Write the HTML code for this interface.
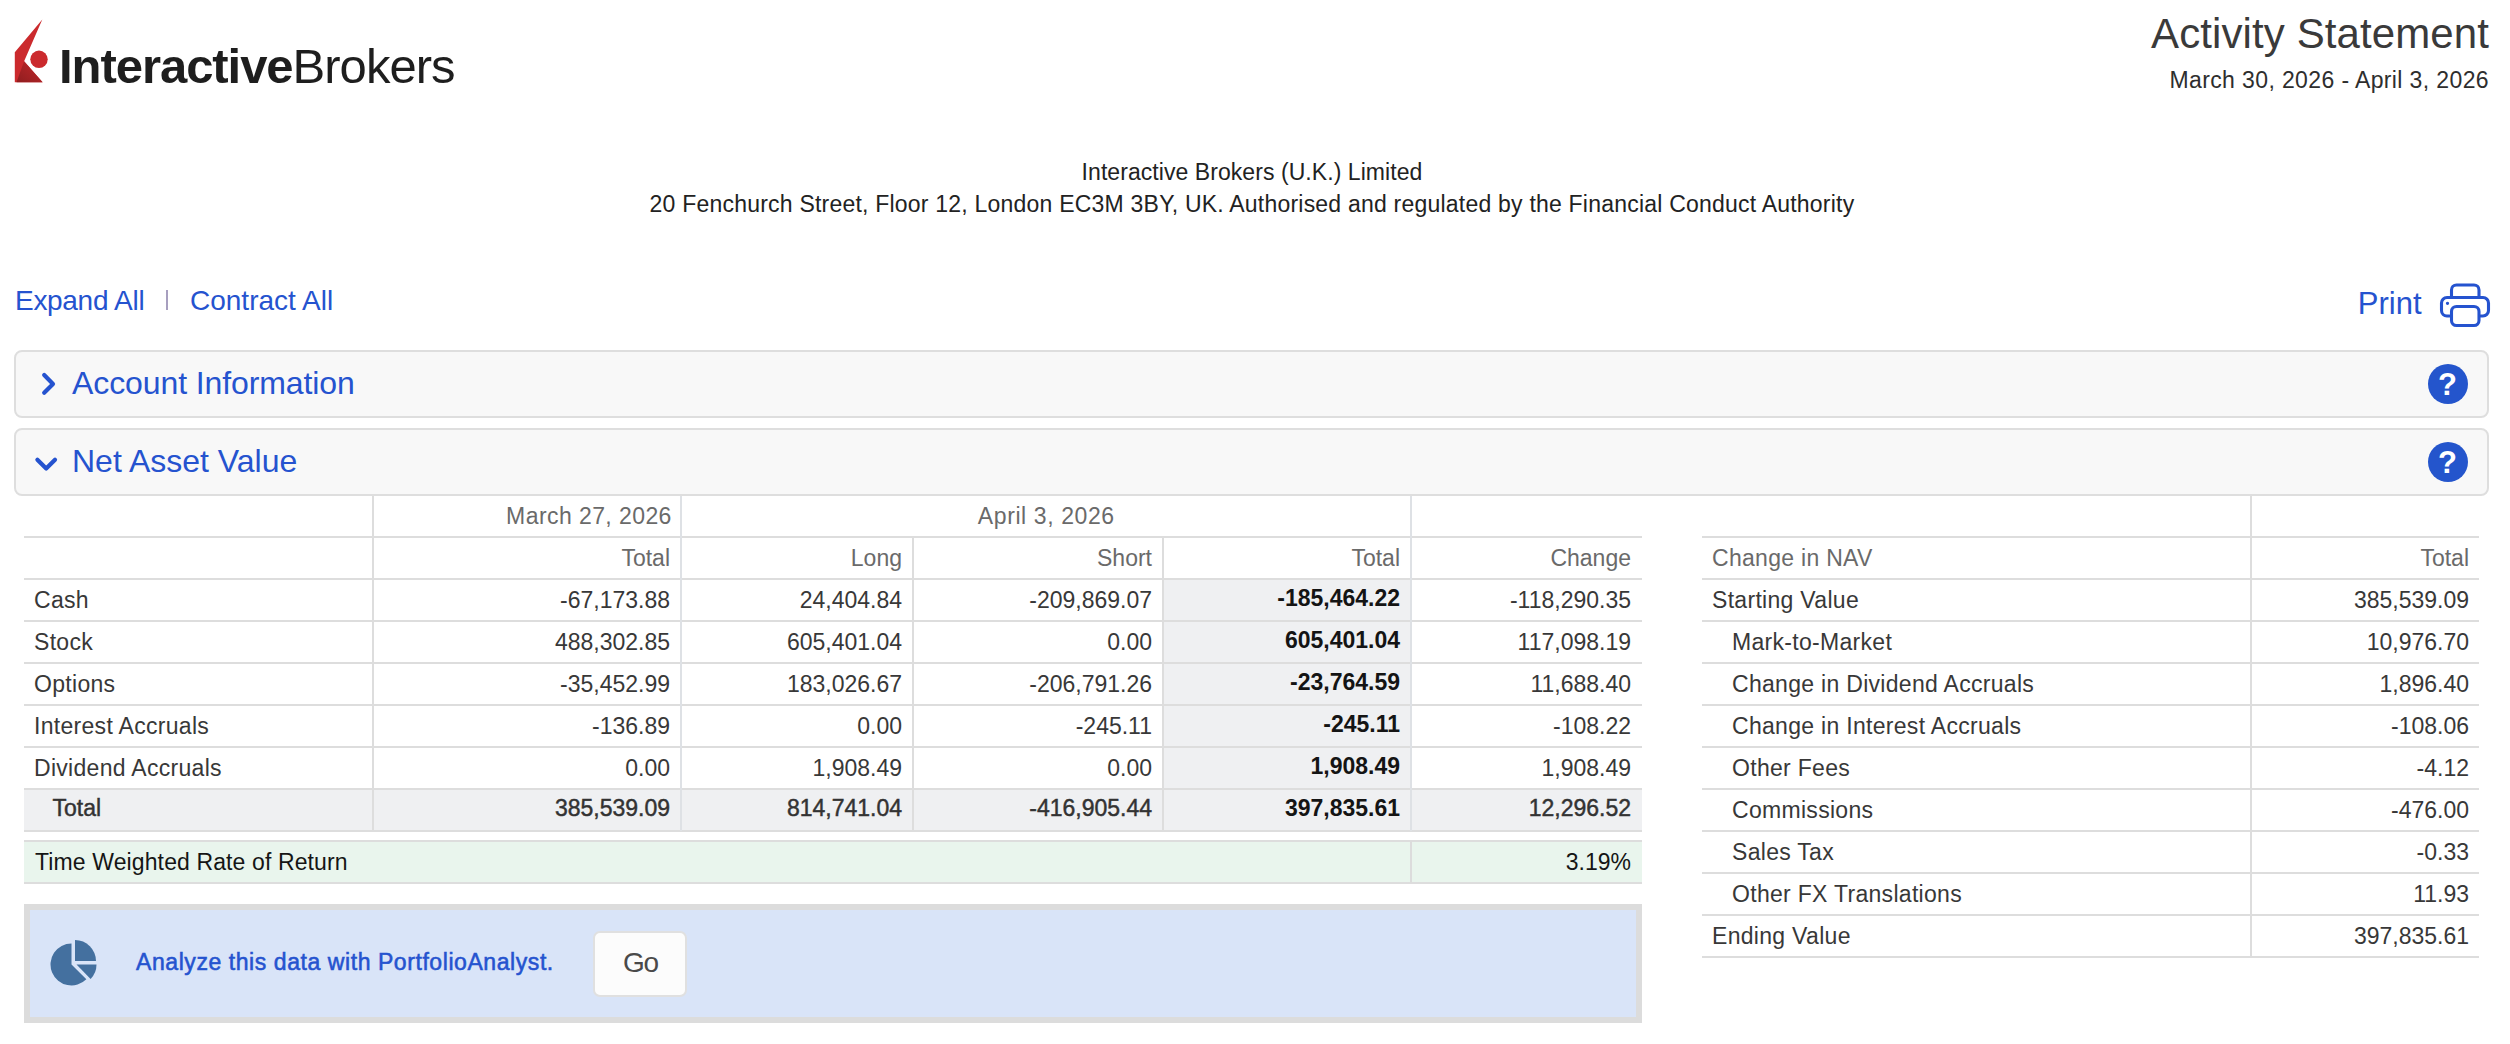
<!DOCTYPE html>
<html><head><meta charset="utf-8"><title>Activity Statement</title>
<style>
html,body{margin:0;padding:0;background:#fff;}
body{width:2510px;height:1044px;position:relative;overflow:hidden;font-family:"Liberation Sans", sans-serif;}
.t{position:absolute;white-space:nowrap;font-family:"Liberation Sans", sans-serif;}
.r{position:absolute;}
</style></head><body>
<svg class="r" style="left:0;top:0" width="60" height="100" viewBox="0 0 60 100">
<defs><linearGradient id="lg" x1="0" y1="1" x2="1" y2="0"><stop offset="0" stop-color="#8f1d1f"/><stop offset="1" stop-color="#c3282b"/></linearGradient></defs>
<polygon points="42.3,19.5 14.8,52.3 14.8,82.2 42.6,82.2 24.1,61.3" fill="#cb2a2d"/>
<polygon points="24.1,61.3 42.6,82.2 16.5,82.2" fill="url(#lg)"/>
<circle cx="39" cy="59.3" r="8.7" fill="#cb2a2d"/>
</svg>
<div class="t" style="top:37.51px;font-size:49px;line-height:56px;font-weight:400;color:#1e1e1e;left:59px;"><b style="font-weight:700;letter-spacing:-1.05px">Interactive</b><span style="letter-spacing:-0.98px">Brokers</span></div>
<div class="t" style="top:9.94px;font-size:42px;line-height:48px;font-weight:400;color:#3a3a3a;right:21px;text-align:right;letter-spacing:0.1px;">Activity Statement</div>
<div class="t" style="top:67.03px;font-size:23px;line-height:26px;font-weight:400;color:#2e2e2e;right:21px;text-align:right;letter-spacing:0.38px;">March 30, 2026 - April 3, 2026</div>
<div class="t" style="top:159.03px;font-size:23px;line-height:26px;font-weight:400;color:#222;left:252px;width:2000px;text-align:center;letter-spacing:0.06px;">Interactive Brokers (U.K.) Limited</div>
<div class="t" style="top:191.03px;font-size:23px;line-height:26px;font-weight:400;color:#222;left:252px;width:2000px;text-align:center;letter-spacing:0.215px;">20 Fenchurch Street, Floor 12, London EC3M 3BY, UK. Authorised and regulated by the Financial Conduct Authority</div>
<div class="t" style="top:284.79px;font-size:28px;line-height:32px;font-weight:400;color:#2553cf;left:15px;letter-spacing:-0.3px;">Expand All</div>
<div class="r" style="left:166px;top:290px;width:2px;height:20px;background:#a79fbf;"></div>
<div class="t" style="top:284.79px;font-size:28px;line-height:32px;font-weight:400;color:#2553cf;left:190px;letter-spacing:0px;">Contract All</div>
<div class="t" style="top:285.75px;font-size:31px;line-height:36px;font-weight:400;color:#2553cf;right:88.5px;text-align:right;">Print</div>
<svg class="r" style="left:2436px;top:279px" width="58" height="52" viewBox="0 0 58 52" fill="none" stroke="#2553cf" stroke-width="3.1" stroke-linejoin="round" stroke-linecap="round">
<path d="M15.5 18 V11 a5 5 0 0 1 5 -5 H38 a5 5 0 0 1 5 5 V18"/>
<path d="M13.5 37 H11 a5.5 5.5 0 0 1 -5.5 -5.5 V24 a5.5 5.5 0 0 1 5.5 -5.5 H47 a5.5 5.5 0 0 1 5.5 5.5 V31.5 a5.5 5.5 0 0 1 -5.5 5.5 H44.5"/>
<rect x="15.5" y="27.5" width="27.5" height="19" rx="5"/>
<circle cx="11.5" cy="24.3" r="0.9" fill="#2553cf" stroke-width="1.5"/>
</svg>
<div class="r" style="left:14px;top:350px;width:2475px;height:68px;box-sizing:border-box;border:2px solid #dedede;border-radius:8px;background:#f8f8f8"></div>
<svg class="r" style="left:36px;top:368.0px" width="26" height="32" viewBox="0 0 26 32"><path d="M8.2 7.1 L17 16 L8.2 24.7" fill="none" stroke="#2553cf" stroke-width="4.2" stroke-linecap="round" stroke-linejoin="round"/></svg>
<div class="t" style="top:364.91px;font-size:32px;line-height:37px;font-weight:400;color:#2553cf;left:72px;letter-spacing:-0.1px;">Account Information</div>
<div class="r" style="left:2427.5px;top:364.0px;width:40px;height:40px;border-radius:50%;background:#2455cc"></div>
<div class="t" style="top:367.25px;font-size:31px;line-height:36px;font-weight:700;color:#fff;left:1447.5px;width:2000px;text-align:center;">?</div>
<div class="r" style="left:14px;top:428px;width:2475px;height:68px;box-sizing:border-box;border:2px solid #dedede;border-radius:8px;background:#f8f8f8"></div>
<svg class="r" style="left:30px;top:446.0px" width="32" height="32" viewBox="0 0 32 32"><path d="M7.4 13.7 L16.2 22.5 L25 13.7" fill="none" stroke="#2553cf" stroke-width="4.2" stroke-linecap="round" stroke-linejoin="round"/></svg>
<div class="t" style="top:442.91px;font-size:32px;line-height:37px;font-weight:400;color:#2553cf;left:72px;letter-spacing:0px;">Net Asset Value</div>
<div class="r" style="left:2427.5px;top:442.0px;width:40px;height:40px;border-radius:50%;background:#2455cc"></div>
<div class="t" style="top:445.25px;font-size:31px;line-height:36px;font-weight:700;color:#fff;left:1447.5px;width:2000px;text-align:center;">?</div>
<div class="r" style="left:1163px;top:579px;width:248px;height:252px;background:#eff0f2;"></div>
<div class="r" style="left:24px;top:789px;width:1618px;height:42px;background:#eff0f2;"></div>
<div class="r" style="left:24px;top:841px;width:1618px;height:42px;background:#e9f5ed;"></div>
<div class="r" style="left:24px;top:536px;width:1618px;height:2px;background:#dddddd;"></div>
<div class="r" style="left:24px;top:578px;width:1618px;height:2px;background:#dddddd;"></div>
<div class="r" style="left:24px;top:620px;width:1618px;height:2px;background:#dddddd;"></div>
<div class="r" style="left:24px;top:662px;width:1618px;height:2px;background:#dddddd;"></div>
<div class="r" style="left:24px;top:704px;width:1618px;height:2px;background:#dddddd;"></div>
<div class="r" style="left:24px;top:746px;width:1618px;height:2px;background:#dddddd;"></div>
<div class="r" style="left:24px;top:788px;width:1618px;height:2px;background:#dddddd;"></div>
<div class="r" style="left:24px;top:830px;width:1618px;height:2px;background:#dddddd;"></div>
<div class="r" style="left:24px;top:840px;width:1618px;height:2px;background:#dddddd;"></div>
<div class="r" style="left:24px;top:882px;width:1618px;height:2px;background:#dddddd;"></div>
<div class="r" style="left:680px;top:496px;width:2px;height:335px;background:#dee1e5;"></div>
<div class="r" style="left:1410px;top:496px;width:2px;height:335px;background:#dee1e5;"></div>
<div class="r" style="left:372px;top:496px;width:2px;height:335px;background:#dddddd;"></div>
<div class="r" style="left:912px;top:537px;width:2px;height:294px;background:#dddddd;"></div>
<div class="r" style="left:1162px;top:537px;width:2px;height:294px;background:#dddddd;"></div>
<div class="r" style="left:1410px;top:841px;width:2px;height:42px;background:#dcdcdc;"></div>
<div class="t" style="top:503.03px;font-size:23px;line-height:26px;font-weight:400;color:#6a6a6a;right:1838.2px;text-align:right;letter-spacing:0.42px;">March 27, 2026</div>
<div class="t" style="top:503.03px;font-size:23px;line-height:26px;font-weight:400;color:#6a6a6a;left:46.299999999999955px;width:2000px;text-align:center;letter-spacing:0.6px;">April 3, 2026</div>
<div class="t" style="top:545.03px;font-size:23px;line-height:26px;font-weight:400;color:#6a6a6a;right:1840px;text-align:right;">Total</div>
<div class="t" style="top:545.03px;font-size:23px;line-height:26px;font-weight:400;color:#6a6a6a;right:1608px;text-align:right;">Long</div>
<div class="t" style="top:545.03px;font-size:23px;line-height:26px;font-weight:400;color:#6a6a6a;right:1358px;text-align:right;">Short</div>
<div class="t" style="top:545.03px;font-size:23px;line-height:26px;font-weight:400;color:#6a6a6a;right:1110px;text-align:right;">Total</div>
<div class="t" style="top:545.03px;font-size:23px;line-height:26px;font-weight:400;color:#6a6a6a;right:879px;text-align:right;">Change</div>
<div class="t" style="top:587.03px;font-size:23px;line-height:26px;font-weight:400;color:#383838;left:34px;letter-spacing:0.3px;">Cash</div>
<div class="t" style="top:587.03px;font-size:23px;line-height:26px;font-weight:400;color:#383838;right:1840px;text-align:right;">-67,173.88</div>
<div class="t" style="top:587.03px;font-size:23px;line-height:26px;font-weight:400;color:#383838;right:1608px;text-align:right;">24,404.84</div>
<div class="t" style="top:587.03px;font-size:23px;line-height:26px;font-weight:400;color:#383838;right:1358px;text-align:right;">-209,869.07</div>
<div class="t" style="top:585.03px;font-size:23px;line-height:26px;font-weight:700;color:#141414;right:1110px;text-align:right;">-185,464.22</div>
<div class="t" style="top:587.03px;font-size:23px;line-height:26px;font-weight:400;color:#383838;right:879px;text-align:right;">-118,290.35</div>
<div class="t" style="top:629.03px;font-size:23px;line-height:26px;font-weight:400;color:#383838;left:34px;letter-spacing:0.3px;">Stock</div>
<div class="t" style="top:629.03px;font-size:23px;line-height:26px;font-weight:400;color:#383838;right:1840px;text-align:right;">488,302.85</div>
<div class="t" style="top:629.03px;font-size:23px;line-height:26px;font-weight:400;color:#383838;right:1608px;text-align:right;">605,401.04</div>
<div class="t" style="top:629.03px;font-size:23px;line-height:26px;font-weight:400;color:#383838;right:1358px;text-align:right;">0.00</div>
<div class="t" style="top:627.03px;font-size:23px;line-height:26px;font-weight:700;color:#141414;right:1110px;text-align:right;">605,401.04</div>
<div class="t" style="top:629.03px;font-size:23px;line-height:26px;font-weight:400;color:#383838;right:879px;text-align:right;">117,098.19</div>
<div class="t" style="top:671.03px;font-size:23px;line-height:26px;font-weight:400;color:#383838;left:34px;letter-spacing:0.3px;">Options</div>
<div class="t" style="top:671.03px;font-size:23px;line-height:26px;font-weight:400;color:#383838;right:1840px;text-align:right;">-35,452.99</div>
<div class="t" style="top:671.03px;font-size:23px;line-height:26px;font-weight:400;color:#383838;right:1608px;text-align:right;">183,026.67</div>
<div class="t" style="top:671.03px;font-size:23px;line-height:26px;font-weight:400;color:#383838;right:1358px;text-align:right;">-206,791.26</div>
<div class="t" style="top:669.03px;font-size:23px;line-height:26px;font-weight:700;color:#141414;right:1110px;text-align:right;">-23,764.59</div>
<div class="t" style="top:671.03px;font-size:23px;line-height:26px;font-weight:400;color:#383838;right:879px;text-align:right;">11,688.40</div>
<div class="t" style="top:713.03px;font-size:23px;line-height:26px;font-weight:400;color:#383838;left:34px;letter-spacing:0.3px;">Interest Accruals</div>
<div class="t" style="top:713.03px;font-size:23px;line-height:26px;font-weight:400;color:#383838;right:1840px;text-align:right;">-136.89</div>
<div class="t" style="top:713.03px;font-size:23px;line-height:26px;font-weight:400;color:#383838;right:1608px;text-align:right;">0.00</div>
<div class="t" style="top:713.03px;font-size:23px;line-height:26px;font-weight:400;color:#383838;right:1358px;text-align:right;">-245.11</div>
<div class="t" style="top:711.03px;font-size:23px;line-height:26px;font-weight:700;color:#141414;right:1110px;text-align:right;">-245.11</div>
<div class="t" style="top:713.03px;font-size:23px;line-height:26px;font-weight:400;color:#383838;right:879px;text-align:right;">-108.22</div>
<div class="t" style="top:755.03px;font-size:23px;line-height:26px;font-weight:400;color:#383838;left:34px;letter-spacing:0.3px;">Dividend Accruals</div>
<div class="t" style="top:755.03px;font-size:23px;line-height:26px;font-weight:400;color:#383838;right:1840px;text-align:right;">0.00</div>
<div class="t" style="top:755.03px;font-size:23px;line-height:26px;font-weight:400;color:#383838;right:1608px;text-align:right;">1,908.49</div>
<div class="t" style="top:755.03px;font-size:23px;line-height:26px;font-weight:400;color:#383838;right:1358px;text-align:right;">0.00</div>
<div class="t" style="top:753.03px;font-size:23px;line-height:26px;font-weight:700;color:#141414;right:1110px;text-align:right;">1,908.49</div>
<div class="t" style="top:755.03px;font-size:23px;line-height:26px;font-weight:400;color:#383838;right:879px;text-align:right;">1,908.49</div>
<div class="t" style="top:795.03px;font-size:23px;line-height:26px;font-weight:400;color:#333;left:52.5px;-webkit-text-stroke:0.45px #333;">Total</div>
<div class="t" style="top:795.03px;font-size:23px;line-height:26px;font-weight:400;color:#333;right:1840px;text-align:right;-webkit-text-stroke:0.45px #333;">385,539.09</div>
<div class="t" style="top:795.03px;font-size:23px;line-height:26px;font-weight:400;color:#333;right:1608px;text-align:right;-webkit-text-stroke:0.45px #333;">814,741.04</div>
<div class="t" style="top:795.03px;font-size:23px;line-height:26px;font-weight:400;color:#333;right:1358px;text-align:right;-webkit-text-stroke:0.45px #333;">-416,905.44</div>
<div class="t" style="top:795.03px;font-size:23px;line-height:26px;font-weight:700;color:#141414;right:1110px;text-align:right;">397,835.61</div>
<div class="t" style="top:795.03px;font-size:23px;line-height:26px;font-weight:400;color:#333;right:879px;text-align:right;-webkit-text-stroke:0.45px #333;">12,296.52</div>
<div class="t" style="top:848.53px;font-size:23px;line-height:26px;font-weight:400;color:#151515;left:35px;letter-spacing:0.12px;">Time Weighted Rate of Return</div>
<div class="t" style="top:848.53px;font-size:23px;line-height:26px;font-weight:400;color:#151515;right:879px;text-align:right;">3.19%</div>
<div class="r" style="left:24px;top:904px;width:1618px;height:119px;box-sizing:border-box;border:6px solid #dcdcdc;background:#d9e4f8"></div>
<svg class="r" style="left:46px;top:936px" width="56" height="56" viewBox="46 936 56 56">
<path d="M71.5 964.5 V943.5 A21 21 0 1 0 86.35 979.35 Z" fill="#44709f"/>
<path d="M75 961 V940 A21 21 0 0 1 96 961 Z" fill="#44709f"/>
<path d="M76.5 964.5 H96.5 A21 21 0 0 1 90.6 979 Z" fill="#44709f"/>
</svg>
<div class="t" style="top:948.63px;font-size:23px;line-height:26px;font-weight:400;color:#2553cf;left:136px;letter-spacing:0.57px;-webkit-text-stroke:0.55px #2553cf;">Analyze this data with PortfolioAnalyst.</div>
<div class="r" style="left:593px;top:931px;width:94px;height:66px;box-sizing:border-box;border:2px solid #e0e0e0;border-radius:7px;background:#fcfcfc"></div>
<div class="t" style="top:946.59px;font-size:28px;line-height:32px;font-weight:400;color:#4a4a4a;left:-359.5px;width:2000px;text-align:center;letter-spacing:-1.3px;">Go</div>
<div class="r" style="left:1702px;top:536px;width:777px;height:2px;background:#dddddd;"></div>
<div class="r" style="left:1702px;top:578px;width:777px;height:2px;background:#dddddd;"></div>
<div class="r" style="left:1702px;top:620px;width:777px;height:2px;background:#dddddd;"></div>
<div class="r" style="left:1702px;top:662px;width:777px;height:2px;background:#dddddd;"></div>
<div class="r" style="left:1702px;top:704px;width:777px;height:2px;background:#dddddd;"></div>
<div class="r" style="left:1702px;top:746px;width:777px;height:2px;background:#dddddd;"></div>
<div class="r" style="left:1702px;top:788px;width:777px;height:2px;background:#dddddd;"></div>
<div class="r" style="left:1702px;top:830px;width:777px;height:2px;background:#dddddd;"></div>
<div class="r" style="left:1702px;top:872px;width:777px;height:2px;background:#dddddd;"></div>
<div class="r" style="left:1702px;top:914px;width:777px;height:2px;background:#dddddd;"></div>
<div class="r" style="left:1702px;top:956px;width:777px;height:2px;background:#dddddd;"></div>
<div class="r" style="left:2250px;top:496px;width:2px;height:461px;background:#dddddd;"></div>
<div class="t" style="top:545.03px;font-size:23px;line-height:26px;font-weight:400;color:#6a6a6a;left:1712px;letter-spacing:0.29px;">Change in NAV</div>
<div class="t" style="top:545.03px;font-size:23px;line-height:26px;font-weight:400;color:#6a6a6a;right:41px;text-align:right;">Total</div>
<div class="t" style="top:587.03px;font-size:23px;line-height:26px;font-weight:400;color:#383838;left:1712px;letter-spacing:0.3px;">Starting Value</div>
<div class="t" style="top:587.03px;font-size:23px;line-height:26px;font-weight:400;color:#383838;right:41px;text-align:right;">385,539.09</div>
<div class="t" style="top:629.03px;font-size:23px;line-height:26px;font-weight:400;color:#383838;left:1732px;letter-spacing:0.3px;">Mark-to-Market</div>
<div class="t" style="top:629.03px;font-size:23px;line-height:26px;font-weight:400;color:#383838;right:41px;text-align:right;">10,976.70</div>
<div class="t" style="top:671.03px;font-size:23px;line-height:26px;font-weight:400;color:#383838;left:1732px;letter-spacing:0.3px;">Change in Dividend Accruals</div>
<div class="t" style="top:671.03px;font-size:23px;line-height:26px;font-weight:400;color:#383838;right:41px;text-align:right;">1,896.40</div>
<div class="t" style="top:713.03px;font-size:23px;line-height:26px;font-weight:400;color:#383838;left:1732px;letter-spacing:0.3px;">Change in Interest Accruals</div>
<div class="t" style="top:713.03px;font-size:23px;line-height:26px;font-weight:400;color:#383838;right:41px;text-align:right;">-108.06</div>
<div class="t" style="top:755.03px;font-size:23px;line-height:26px;font-weight:400;color:#383838;left:1732px;letter-spacing:0.3px;">Other Fees</div>
<div class="t" style="top:755.03px;font-size:23px;line-height:26px;font-weight:400;color:#383838;right:41px;text-align:right;">-4.12</div>
<div class="t" style="top:797.03px;font-size:23px;line-height:26px;font-weight:400;color:#383838;left:1732px;letter-spacing:0.3px;">Commissions</div>
<div class="t" style="top:797.03px;font-size:23px;line-height:26px;font-weight:400;color:#383838;right:41px;text-align:right;">-476.00</div>
<div class="t" style="top:839.03px;font-size:23px;line-height:26px;font-weight:400;color:#383838;left:1732px;letter-spacing:0.3px;">Sales Tax</div>
<div class="t" style="top:839.03px;font-size:23px;line-height:26px;font-weight:400;color:#383838;right:41px;text-align:right;">-0.33</div>
<div class="t" style="top:881.03px;font-size:23px;line-height:26px;font-weight:400;color:#383838;left:1732px;letter-spacing:0.3px;">Other FX Translations</div>
<div class="t" style="top:881.03px;font-size:23px;line-height:26px;font-weight:400;color:#383838;right:41px;text-align:right;">11.93</div>
<div class="t" style="top:923.03px;font-size:23px;line-height:26px;font-weight:400;color:#383838;left:1712px;letter-spacing:0.3px;">Ending Value</div>
<div class="t" style="top:923.03px;font-size:23px;line-height:26px;font-weight:400;color:#383838;right:41px;text-align:right;">397,835.61</div>
</body></html>
